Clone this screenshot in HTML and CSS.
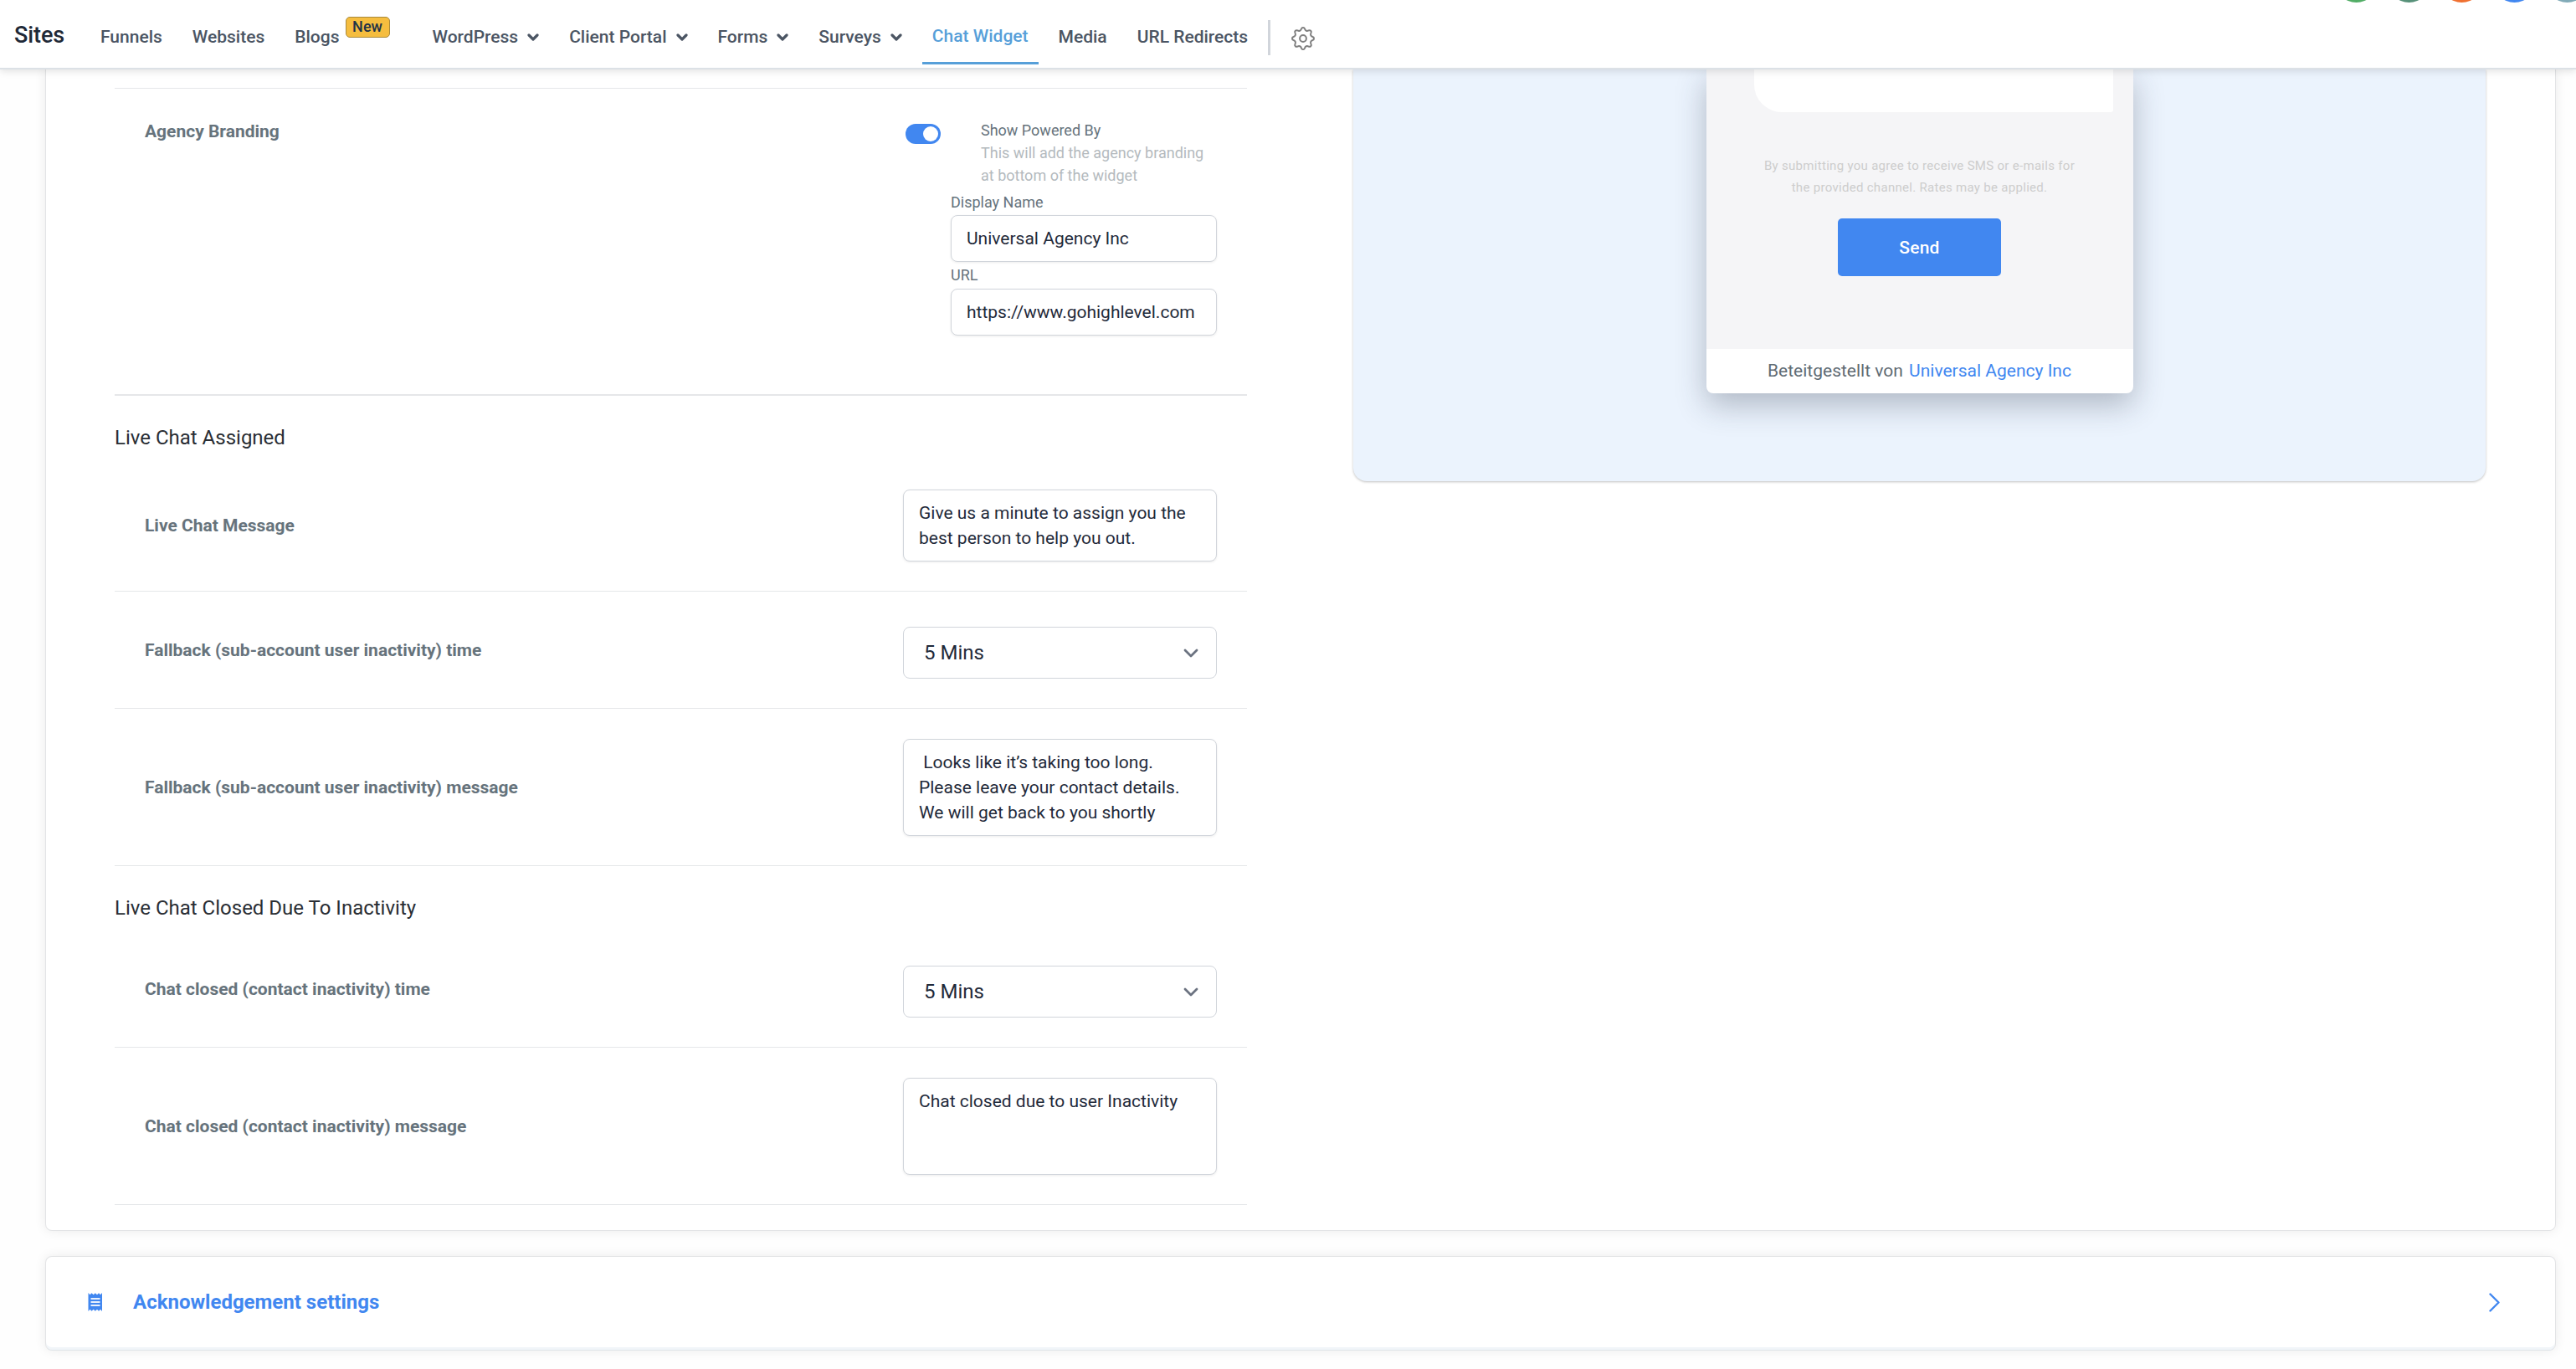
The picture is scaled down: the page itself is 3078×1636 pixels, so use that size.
FILE: index.html
```html
<!DOCTYPE html>
<html lang="en">
<head>
    <meta charset="UTF-8">
    <meta name="viewport" content="width=device-width, initial-scale=1.0">
    <title>Chat Widget</title>
    <link rel="stylesheet" href="styles.css">
</head>
<body>
    <!-- Navbar -->
    <header class="navbar">
        <h1 class="logo">Sites</h1>
        <nav class="nav-links">
            <a href="#">Funnels</a>
            <a href="#">Websites</a>
            <a href="#" class="with-badge">Blogs<span class="badge">New</span></a>
            <a href="#">WordPress<svg class="caret" viewBox="0 0 14 9"><path d="M2 2l5 5 5-5"/></svg></a>
            <a href="#">Client Portal<svg class="caret" viewBox="0 0 14 9"><path d="M2 2l5 5 5-5"/></svg></a>
            <a href="#">Forms<svg class="caret" viewBox="0 0 14 9"><path d="M2 2l5 5 5-5"/></svg></a>
            <a href="#">Surveys<svg class="caret" viewBox="0 0 14 9"><path d="M2 2l5 5 5-5"/></svg></a>
            <a href="#" class="active">Chat Widget</a>
            <a href="#">Media</a>
            <a href="#">URL Redirects</a>
        </nav>
        <span class="divider"></span>
        <svg class="gear" viewBox="-15 -15 30 30">
            <path d="M0-13C3-13 1.06-10.39 3.83-9.24S7.07-11.31 9.19-9.19S8.09-6.6 9.24-3.83S13-3 13 0S10.39 1.06 9.24 3.83S11.31 7.07 9.19 9.19S6.6 8.09 3.83 9.24S3 13 0 13S-1.06 10.39-3.83 9.24S-7.07 11.31-9.19 9.19S-8.09 6.6-9.24 3.83S-13 3-13 0S-10.39-1.06-9.24-3.83S-11.31-7.07-9.19-9.19S-6.6-8.09-3.83-9.24S-3-13 0-13Z"/>
            <circle r="3.9"/>
        </svg>
        <div class="top-actions">
            <span class="dot phone"></span>
            <span class="dot chat"></span>
            <span class="dot bell"></span>
            <span class="dot help"></span>
            <span class="dot user"></span>
        </div>
    </header>

    <main>
        <section class="card settings">
            <div class="form">
                <div class="row branding">
                    <div class="label">Agency Branding</div>
                    <div class="control">
                        <div class="toggle-row">
                            <span class="toggle"></span>
                            <div class="toggle-text">
                                <div>Show Powered By</div>
                                <div class="hint">This will add the agency branding at bottom of the widget</div>
                            </div>
                        </div>
                        <div class="fields">
                            <label for="displayName">Display Name</label>
                            <input type="text" id="displayName" value="Universal Agency Inc">
                            <label for="url">URL</label>
                            <input type="text" id="url" value="https://www.gohighlevel.com">
                        </div>
                    </div>
                </div>

                <h2 class="first-title">Live Chat Assigned</h2>
                <div class="row">
                    <div class="label">Live Chat Message</div>
                    <div class="control">
                        <textarea class="two-lines">Give us a minute to assign you the best person to help you out.</textarea>
                    </div>
                </div>
                <div class="row select-row">
                    <div class="label">Fallback (sub-account user inactivity) time</div>
                    <div class="control">
                        <div class="select">5 Mins<svg viewBox="0 0 18 11"><path d="M2 2l7 7 7-7"/></svg></div>
                    </div>
                </div>
                <div class="row">
                    <div class="label">Fallback (sub-account user inactivity) message</div>
                    <div class="control">
                        <textarea> Looks like it’s taking too long. Please leave your contact details. We will get back to you shortly</textarea>
                    </div>
                </div>

                <h2>Live Chat Closed Due To Inactivity</h2>
                <div class="row select-row">
                    <div class="label">Chat closed (contact inactivity) time</div>
                    <div class="control">
                        <div class="select">5 Mins<svg viewBox="0 0 18 11"><path d="M2 2l7 7 7-7"/></svg></div>
                    </div>
                </div>
                <div class="row">
                    <div class="label">Chat closed (contact inactivity) message</div>
                    <div class="control">
                        <textarea>Chat closed due to user Inactivity</textarea>
                    </div>
                </div>
            </div>

            <!-- Widget preview -->
            <div class="preview">
                <div class="widget">
                    <div class="widget-body">
                        <div class="bubble"></div>
                        <p class="consent">By submitting you agree to receive SMS or e-mails for the provided channel. Rates may be applied.</p>
                        <button class="btn-send">Send</button>
                    </div>
                    <div class="widget-footer">Beteitgestellt von <a href="#">Universal Agency Inc</a></div>
                </div>
            </div>
        </section>

        <section class="card accordion">
            <svg class="receipt" viewBox="0 0 18 22">
                <path class="paper" d="M.5 0L2.500 2.200 4.500.3 6.700 2.200 8.800.3 11 2.200 13 .3 15 2.200 17 0V22L15 19.800 13 21.700 11 19.800 8.800 21.700 6.700 19.800 4.500 21.700 2.500 19.800 .5 22Z"/>
                <path class="lines" d="M3.500 7h11M3.500 11h11M3.500 15h11"/>
            </svg>
            <h3>Acknowledgement settings</h3>
            <svg class="arrow" viewBox="0 0 13 23"><path d="M1.500 1.500l10 10-10 10"/></svg>
        </section>
    </main>
</body>
</html>
```
FILE: styles.css
```css
* {
    margin: 0;
    padding: 0;
    box-sizing: border-box;
    font-family: Roboto, 'Liberation Sans', sans-serif;
}

body {
    background-color: #fefefe;
    height: 1636px;
    overflow: hidden;
    font-size: 21px;
    color: #1f2a3a;
}

svg {
    fill: none;
    stroke: currentColor;
    stroke-linecap: round;
    stroke-linejoin: round;
}

/* Navbar */
.navbar {
    position: relative;
    z-index: 2;
    height: 83px;
    display: flex;
    align-items: center;
    background-color: #fff;
    border-bottom: 2px solid #dce1e6;
    box-shadow: 0 2px 9px rgba(0, 0, 0, 0.12);
}

.logo {
    width: 90px;
    padding: 3px 0 0 17px;
    font-size: 27px;
    font-weight: 500;
    letter-spacing: -0.1px;
    color: #1f2937;
}

.nav-links {
    display: flex;
    gap: 12px;
    margin-left: 18px;
}

.nav-links a {
    display: flex;
    align-items: center;
    height: 68px;
    padding: 5px 12px 0;
    border-bottom: 3px solid transparent;
    margin-top: 5px;
    font-weight: 500;
    color: #4b5563;
    text-decoration: none;
}

.nav-links .active {
    padding-top: 3px;
    color: #569fd9;
    border-color: #569fd9;
}

.nav-links .with-badge {
    margin-right: 15px;
}

.badge {
    width: 53px;
    height: 25px;
    margin: -23px 0 0 7px;
    border: 1px solid #a98a3c;
    border-radius: 5px;
    background-color: #f5bd3f;
    font-size: 18px;
    line-height: 22px;
    text-align: center;
    color: #1f3347;
}

.caret {
    width: 14px;
    height: 9px;
    margin: 1px 0 0 11px;
    stroke-width: 3.2;
}

.divider {
    width: 3px;
    height: 42px;
    margin: 8px 0 0 12px;
    background-color: #d1d5db;
}

.gear {
    width: 30px;
    height: 30px;
    margin: 10px 0 0 24px;
    color: #7f7f7f;
    stroke-width: 2;
}

/* round buttons hanging in from the bar above */
.top-actions {
    position: absolute;
    top: -48px;
    right: -15px;
    display: flex;
    gap: 12px;
}

.dot {
    width: 51px;
    height: 51px;
    border-radius: 50%;
}

.phone { background-color: #52ad66; }
.chat { background-color: #579179; }
.bell { background-color: #f07030; }
.help { background-color: #4187f0; }
.user { background-color: #82abb8; }

/* Cards */
main {
    padding: 0 24px 0 54px;
}

.card {
    background-color: #fff;
    border: 1px solid #e3e4e6;
    border-radius: 8px;
    box-shadow: 0 0 14px rgba(0, 0, 0, 0.08);
}

.settings {
    display: flex;
    align-items: flex-start;
    height: 1388px;
    border-top: none;
    border-radius: 0 0 8px 8px;
    padding: 22px 82px 0;
}

.form {
    width: 1353px;
    border-top: 1px solid #e5e7e9;
}

.row {
    display: flex;
    align-items: center;
    justify-content: space-between;
    padding: 36px 36px 35px 36px;
    border-bottom: 1px solid #e5e7e9;
}

.select-row {
    height: 140px;
    padding: 0 36px;
}

.select-row .control {
    padding-top: 7px;
}

.label {
    font-weight: 700;
    line-height: 30px;
    color: #66737c;
}

.control {
    width: 375px;
}

.form h2 {
    height: 77px;
    padding-top: 32px;
    font-size: 24px;
    font-weight: 400;
    line-height: 36px;
    color: #2a2e34;
}

.form .first-title {
    height: 76px;
}

.branding {
    align-items: flex-start;
    height: 367px;
    border-bottom-width: 2px;
}

.toggle-row {
    display: flex;
}

.toggle {
    width: 42px;
    height: 24px;
    margin: 6px 48px 0 3px;
    padding: 3px;
    border-radius: 12px;
    background-color: #4187f0;
}

.toggle::after {
    content: "";
    display: block;
    width: 18px;
    height: 18px;
    margin-left: auto;
    border-radius: 50%;
    background-color: #fff;
}

.toggle-text {
    flex: 1;
    font-size: 18px;
    line-height: 27px;
    color: #66737c;
}

.hint {
    color: #b4babe;
}

.fields {
    width: 318px;
    margin: 5px 0 0 57px;
}

.fields label {
    display: block;
    font-size: 18px;
    line-height: 27px;
    margin-bottom: 2px;
    color: #66737c;
}

input,
textarea,
.select {
    display: block;
    width: 100%;
    border: 1px solid #d1d5db;
    border-radius: 8px;
    background-color: #fff;
    font-size: 21px;
    color: #1f2a3a;
    outline: none;
}

input {
    height: 56px;
    padding: 0 18px;
    margin-bottom: 2px;
    box-shadow: 0 1px 3px rgba(0, 0, 0, 0.08);
}

#url {
    margin-top: 3px;
}

textarea {
    height: 116px;
    padding: 12px 18px;
    line-height: 30px;
    resize: none;
    overflow: hidden;
    box-shadow: 0 1px 3px rgba(0, 0, 0, 0.08);
}

.two-lines {
    height: 86px;
}

.select {
    display: flex;
    align-items: center;
    justify-content: space-between;
    height: 62px;
    padding: 0 21px 0 24px;
    font-size: 24px;
}

.select svg {
    width: 18px;
    height: 11px;
    color: #6b7280;
    stroke-width: 2.8;
}

/* Preview */
.preview {
    display: flex;
    justify-content: center;
    align-items: flex-start;
    width: 1353px;
    height: 492px;
    margin: -22px 0 0 127px;
    border-radius: 0 0 16px 16px;
    background-color: #ebf3fd;
    box-shadow: 0 1px 3px rgba(0, 0, 0, 0.25);
}

.widget {
    width: 510px;
    border-radius: 0 0 8px 8px;
    background-color: #fff;
    box-shadow: 0 14px 36px rgba(40, 50, 70, 0.3);
}

.widget-body {
    height: 334px;
    display: flex;
    flex-direction: column;
    align-items: center;
    background-color: #f5f5f7;
}

.bubble {
    width: 429px;
    height: 51px;
    margin-left: 33px;
    border-radius: 0 0 3px 33px;
    background-color: #fff;
}

.consent {
    width: 380px;
    margin-top: 51px;
    font-size: 15px;
    line-height: 26px;
    letter-spacing: 0.3px;
    text-align: center;
    color: #cdcdcd;
}

.btn-send {
    width: 195px;
    height: 69px;
    margin-top: 24px;
    border: none;
    border-radius: 5px;
    background-color: #4187f0;
    font-size: 21px;
    font-weight: 500;
    letter-spacing: 0.2px;
    color: #fff;
}

.widget-footer {
    height: 53px;
    line-height: 52px;
    text-align: center;
    color: #5f6b73;
}

.widget-footer a {
    margin-left: 2px;
    color: #4187f0;
    text-decoration: none;
}

/* Accordion */
.accordion {
    display: flex;
    align-items: center;
    height: 113px;
    margin-top: 30px;
    padding: 0 66px 3px 50px;
    border-bottom-color: #dfe4e8;
    box-shadow: inset 0 -3px #f1f5f9, 0 0 14px rgba(0, 0, 0, 0.08);
    color: #4187f0;
}

.accordion h3 {
    flex: 1;
    margin-left: 36px;
    font-size: 24px;
    font-weight: 700;
}

.receipt {
    width: 18px;
    height: 22px;
}

.receipt .paper {
    fill: currentColor;
    stroke: none;
}

.receipt .lines {
    stroke: #e8f0fd;
    stroke-width: 1.8;
    stroke-linecap: butt;
}

.arrow {
    width: 13px;
    height: 23px;
    stroke-width: 2.4;
}
```
